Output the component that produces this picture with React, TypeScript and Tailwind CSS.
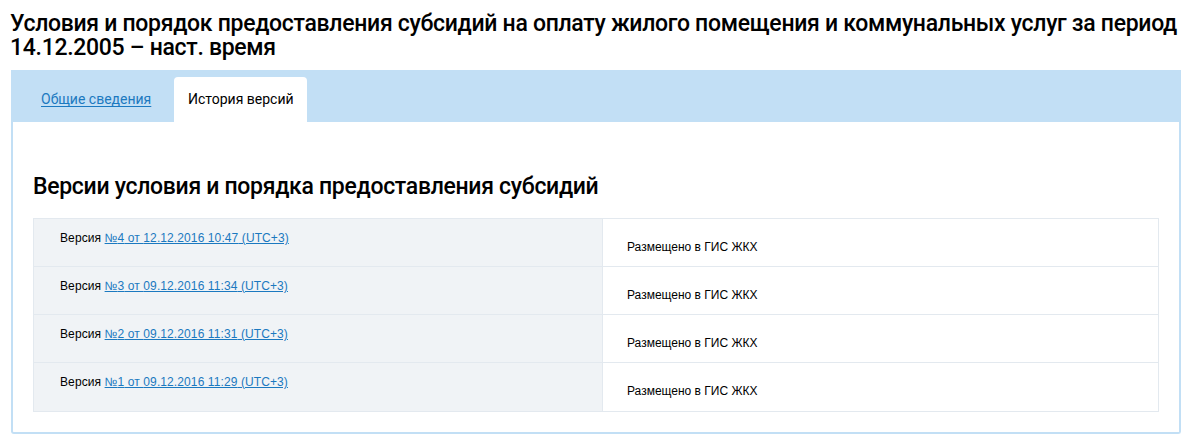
import React from "react";

const versions = [
  { num: 4, date: "12.12.2016 10:47" },
  { num: 3, date: "09.12.2016 11:34" },
  { num: 2, date: "09.12.2016 11:31" },
  { num: 1, date: "09.12.2016 11:29" },
];

export default function App() {
  return (
    <div className="w-[1192px] h-[442px] bg-white overflow-hidden">
      {/* Title */}
      <h1 className="pl-[10px] pr-[11px] pt-[12px] text-[23px] leading-[24px] font-medium text-black font-['Roboto',sans-serif] tracking-[-0.3px]">
        Условия и порядок предоставления субсидий на оплату жилого помещения и коммунальных услуг за период 14.12.2005 – наст. время
      </h1>

      <div className="mx-[11px] mt-[10px]">
        {/* Tabs */}
        <div className="bg-[#c2dff5] h-[52px] pt-[7px] pl-[30px] flex items-end font-['Roboto',sans-serif] text-[14px]">
          <a
            href="#"
            className="h-[45px] flex items-center pr-[23px] text-[#1b79c0] underline underline-offset-2"
          >
            Общие сведения
          </a>
          <div className="h-[45px] w-[133px] bg-white rounded-t-[4px] flex items-center justify-center text-black">
            История версий
          </div>
        </div>

        {/* Panel */}
        <div className="border-x-2 border-b-2 border-[#c2dff5] rounded-b-[3px] px-[20px] pt-[53px] pb-[20px]">
          <h2 className="text-[23px] leading-[24px] font-medium text-black font-['Roboto',sans-serif] tracking-[-0.3px] mb-[19px]">
            Версии условия и порядка предоставления субсидий
          </h2>

          <div className="border border-[#e3e9ef]">
            {versions.map((v, i) => (
              <div
                key={v.num}
                className={
                  "flex h-[48px] " +
                  (i < versions.length - 1 ? "border-b border-[#e3e9ef]" : "")
                }
              >
                <div className="w-[569px] bg-[#f0f3f6] border-r border-[#e3e9ef] pl-[26px] pt-[12px] text-[12px] leading-[14px] font-['Liberation_Sans',Arial,sans-serif] tracking-[0.1px] text-black">
                  Версия{" "}
                  <a href="#" className="text-[#1b79c0] underline">
                    №{v.num} от {v.date} (UTC+3)
                  </a>
                </div>
                <div className="flex-1 pl-[24px] pt-[21px] text-[12px] leading-[14px] font-['Liberation_Sans',Arial,sans-serif] text-black">
                  Размещено в ГИС ЖКХ
                </div>
              </div>
            ))}
          </div>
        </div>
      </div>
    </div>
  );
}
